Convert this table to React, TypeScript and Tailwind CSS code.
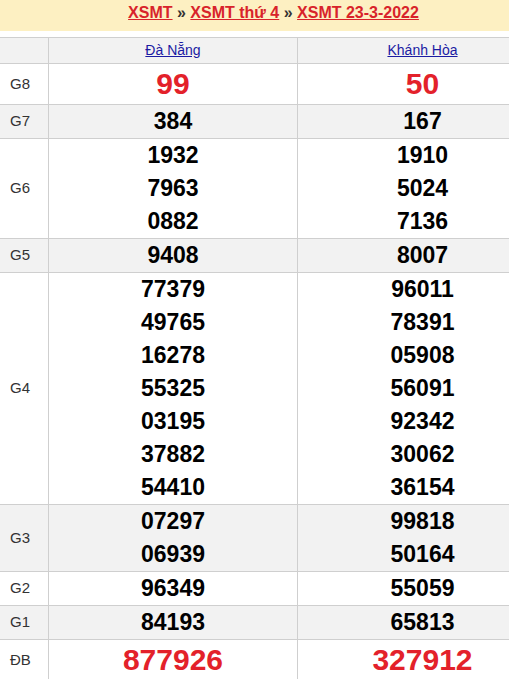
import React from 'react';

interface Prize {
  label: string;
  a: string[];
  b: string[];
  red?: boolean;
}

const prizes: Prize[] = [
  { label: 'G8', a: ['99'], b: ['50'], red: true },
  { label: 'G7', a: ['384'], b: ['167'] },
  { label: 'G6', a: ['1932', '7963', '0882'], b: ['1910', '5024', '7136'] },
  { label: 'G5', a: ['9408'], b: ['8007'] },
  {
    label: 'G4',
    a: ['77379', '49765', '16278', '55325', '03195', '37882', '54410'],
    b: ['96011', '78391', '05908', '56091', '92342', '30062', '36154'],
  },
  { label: 'G3', a: ['07297', '06939'], b: ['99818', '50164'] },
  { label: 'G2', a: ['96349'], b: ['55059'] },
  { label: 'G1', a: ['84193'], b: ['65813'] },
  { label: 'ĐB', a: ['877926'], b: ['327912'], red: true },
];

const NumberCell: React.FC<{ values: string[]; red?: boolean; last?: boolean }> = ({ values, red, last }) => (
  <div
    className={`flex flex-col items-center justify-center w-[249px] shrink-0 ${last ? '' : 'border-r border-[#cfcfcf]'}`}
  >
    {values.map((v) => (
      <span
        key={v}
        className={
          red
            ? 'text-[30px] leading-[40px] font-bold text-[#e3212a]'
            : 'text-[23px] leading-[33px] font-bold text-black'
        }
      >
        {v}
      </span>
    ))}
  </div>
);

export default function App() {
  return (
    <div className="w-[509px] overflow-hidden bg-white font-['Liberation_Sans',Arial,sans-serif]">
      <div className="w-[547px]">
        <div className="h-[31px] mb-[6px] bg-[#fdf0c2] flex items-start justify-center pt-[3px]">
          <div className="text-[16px] leading-[20px] font-bold text-[#d8232a]">
            <a className="underline">XSMT</a>
            <span className="text-[#333]"> » </span>
            <a className="underline">XSMT thứ 4</a>
            <span className="text-[#333]"> » </span>
            <a className="underline">XSMT 23-3-2022</a>
          </div>
        </div>

        <div className="flex h-[26px] border-t border-[#cfcfcf] bg-[#f2f2f2]">
          <div className="w-[49px] shrink-0 border-r border-[#cfcfcf]" />
          <div className="w-[249px] shrink-0 border-r border-[#cfcfcf] flex items-center justify-center">
            <a className="text-[14px] text-[#1b1ba3] underline">Đà Nẵng</a>
          </div>
          <div className="w-[249px] shrink-0 flex items-center justify-center">
            <a className="text-[14px] text-[#1b1ba3] underline">Khánh Hòa</a>
          </div>
        </div>

        {prizes.map((p, i) => (
          <div
            key={p.label}
            className={`flex border-t border-[#cfcfcf] ${i % 2 === 1 ? 'bg-[#f2f2f2]' : 'bg-white'}`}
          >
            <div className="w-[49px] shrink-0 border-r border-[#cfcfcf] flex items-center pl-[10px] text-[15px] text-[#333]">
              {p.label}
            </div>
            <NumberCell values={p.a} red={p.red} />
            <NumberCell values={p.b} red={p.red} last />
          </div>
        ))}
      </div>
    </div>
  );
}
